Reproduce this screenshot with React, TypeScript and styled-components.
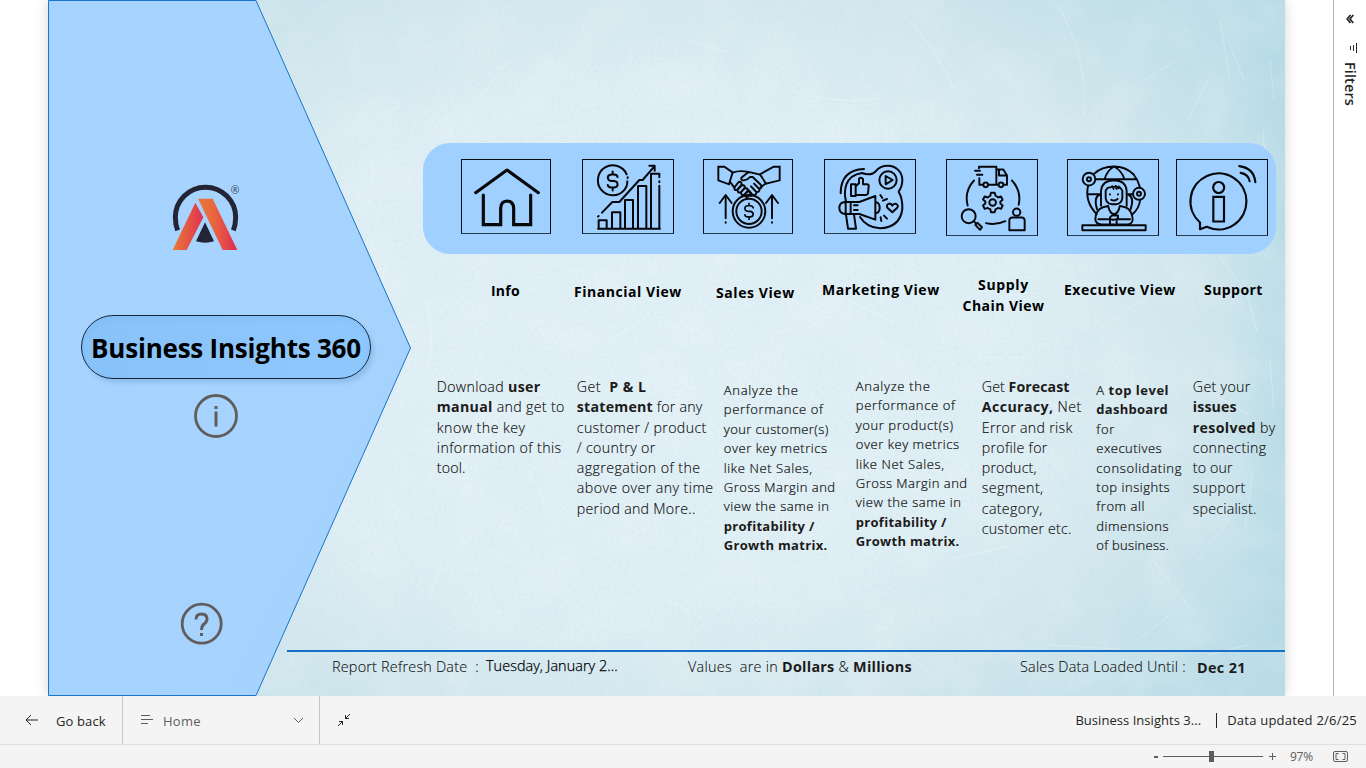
import React, { useLayoutEffect, useRef, useState } from 'react';
import styled, { createGlobalStyle } from 'styled-components';

const GlobalStyle = createGlobalStyle`
  * { box-sizing: border-box; }
  html, body { margin: 0; padding: 0; overflow: hidden; }
  body { background: #fff; color: #252423; font-family: 'Open Sans', 'Noto Sans', sans-serif; }
`;

/* ---------- text ---------- */

const Run = styled.span`
  display: inline-block;
  white-space: pre;
`;
const Strong = styled.b`
  font-weight: 700;
  color: #1c1b1a;
  -webkit-text-stroke: 0;
`;

/* A single line whose tracking is adjusted so that it takes the given width. */
function FitLine({ width, text }: { width: number; text: string }) {
  const ref = useRef<HTMLSpanElement>(null);
  const [spacing, setSpacing] = useState(0);
  const parts = text.split('*');
  const length = text.replace(/\*/g, '').length;
  useLayoutEffect(() => {
    const el = ref.current;
    if (!el) return;
    el.style.letterSpacing = '0px';
    const natural = el.getBoundingClientRect().width;
    const next = (width + 0.8 - natural) / length;
    el.style.letterSpacing = `${next}px`;
    setSpacing(next);
  }, [width, text, length]);
  return (
    <Run ref={ref} style={{ letterSpacing: spacing }}>
      {parts.map((p, i) => (i % 2 ? <Strong key={i}>{p}</Strong> : p))}
    </Run>
  );
}

/* ---------- page ---------- */

const Page = styled.div`
  display: flex;
  flex-direction: column;
  width: 1366px;
  height: 768px;
  overflow: hidden;
`;
const Workspace = styled.div`
  display: flex;
  height: 696px;
  overflow: hidden;
`;
const CanvasArea = styled.div`
  flex: 1;
  padding-left: 48px;
`;
const Canvas = styled.main`
  position: relative;
  display: grid;
  width: 1237px;
  height: 696px;
  box-shadow: 0 0 12px rgba(0, 0, 0, 0.17);
  background: #dfeef4;
`;
const Backdrop = styled.svg`
  position: absolute;
  inset: 0;
`;

/* ---------- left panel ---------- */

const SidePanel = styled.aside`
  position: relative;
  grid-area: 1 / 1;
  justify-self: start;
  width: 363px;
  height: 696px;
  display: flex;
  flex-direction: column;
  align-items: flex-start;
`;
const Logo = styled.svg`
  display: block;
  margin: 180px 0 0 122px;
`;
const TitlePill = styled.div`
  display: flex;
  align-items: center;
  justify-content: center;
  width: 290px;
  height: 64px;
  margin: 60px 0 0 33px;
  padding: 1px 0 0;
  border: 1.4px solid #14273a;
  border-radius: 32px;
  background: linear-gradient(100deg, #87c2f9, #8fc8fd);
  box-shadow: 3px 4px 4px rgba(60, 110, 160, 0.2), inset 0 3px 5px rgba(110, 180, 240, 0.3);
  color: #000;
  font-size: 26px;
  font-weight: 700;
`;
const RoundButton = styled.svg<{ $top: number; $left: number }>`
  display: block;
  margin: ${(p) => p.$top}px 0 0 ${(p) => p.$left}px;
`;

/* ---------- report ---------- */

const Report = styled.section`
  position: relative;
  grid-area: 1 / 1;
  display: flex;
  flex-direction: column;
  height: 696px;
  padding-top: 143px;
  pointer-events: none;
`;
const Tray = styled.nav`
  display: flex;
  align-items: flex-start;
  width: 853px;
  height: 111px;
  margin-left: 375px;
  padding: 16px 0 0 38px;
  border-radius: 27px;
  background: #a0d0ff;
`;
const IconFrame = styled.div<{ $w: number; $h: number; $gap: number }>`
  width: ${(p) => p.$w}px;
  height: ${(p) => p.$h}px;
  margin-right: ${(p) => p.$gap}px;
  border: 1px solid #0a0e14;
  border-bottom-color: #2b3b4e;
  svg { display: block; margin: -1px; }
`;
const Labels = styled.div`
  display: grid;
  grid-template-columns: 83px 142px 106px 140px 102px 140px 60px;
  height: 76px;
  margin-left: 443px;
  padding-top: 25px;
  color: #000;
  font-size: 14px;
  font-weight: 700;
  line-height: 21px;
`;
const Label = styled.div<{ $drop: number }>`
  display: flex;
  flex-direction: column;
  align-items: flex-start;
  margin-top: ${(p) => p.$drop}px;
`;
const CenteredLabel = styled(Label)`
  align-items: center;
  width: 83px;
`;
const Descriptions = styled.div`
  display: grid;
  grid-template-columns: 140px 147px 132px 126px 114.5px 96.5px 90px;
  margin: 47px 0 0 388.8px;
`;
const Description = styled.div<{ $small?: boolean; $drop?: number }>`
  display: flex;
  flex-direction: column;
  align-items: flex-start;
  margin-top: ${(p) => p.$drop ?? 0}px;
  color: #0c0c0c;
  font-weight: 300;
  font-size: ${(p) => (p.$small ? 13 : 14.2)}px;
  line-height: ${(p) => (p.$small ? 19.4 : 20.3)}px;
  -webkit-text-stroke: ${(p) => (p.$small ? 0.22 : 0.14)}px #1a1a1a;
`;
const Footer = styled.footer`
  display: flex;
  height: 46px;
  margin: auto 0 0 239px;
  padding: 6px 0 0 45px;
  border-top: 2px solid #1670c8;
  font-size: 14.4px;
  font-weight: 300;
  line-height: 18px;
`;
const FootItem = styled.div<{ $w: number; $drop?: number; $dark?: boolean }>`
  width: ${(p) => p.$w}px;
  margin-top: ${(p) => p.$drop ?? 0}px;
  color: ${(p) => (p.$dark ? '#000' : '#111')};
  -webkit-text-stroke: ${(p) => (p.$dark ? '0.25px #000' : '0.12px #111')};
`;

/* ---------- filter pane ---------- */

const FilterPane = styled.aside`
  display: flex;
  flex-direction: column;
  align-items: center;
  width: 33px;
  padding: 14px 0 0;
  border-left: 1px solid #b3b0ad;
`;
const FilterGlyph = styled.svg`
  display: block;
  margin: 19px 0 0 7px;
`;
const FilterText = styled.div`
  margin-top: 9px;
  writing-mode: vertical-rl;
  font-size: 14.5px;
  font-weight: 600;
  line-height: 18px;
  letter-spacing: 0.1px;
`;

/* ---------- bottom bars ---------- */

const PageBar = styled.div`
  display: flex;
  height: 48px;
  background: #f4f4f4;
  font-size: 13px;
`;
const BackButton = styled.div`
  display: flex;
  align-items: center;
  width: 123px;
  padding-left: 25px;
  gap: 17px;
  border-right: 1px solid #c8c6c4;
`;
const PagePicker = styled.div`
  display: flex;
  align-items: center;
  width: 197px;
  padding: 0 15px 0 17px;
  border-right: 1px solid #c8c6c4;
  color: #605e5c;
`;
const BarText = styled.span`
  padding-top: 2px;
`;
const PageName = styled(BarText)`
  flex: 1;
  margin-left: 9px;
`;
const CollapseButton = styled.div`
  display: flex;
  align-items: center;
  flex: 1;
  padding-left: 17px;
`;
const Meta = styled.div`
  display: flex;
  align-items: center;
  padding-right: 9px;
`;
const MetaRule = styled.span`
  width: 1px;
  height: 15px;
  margin: 0 10px 0 15px;
  background: #252423;
`;
const StatusBar = styled.div`
  display: flex;
  align-items: center;
  justify-content: flex-end;
  height: 24px;
  padding-right: 18px;
  border-top: 1px solid #dededd;
  background: #f4f4f4;
  color: #605e5c;
  font-size: 12px;
`;
const Minus = styled.span`
  width: 4px;
  height: 2px;
  margin-right: 5px;
  background: #605e5c;
`;
const Track = styled.div`
  display: flex;
  align-items: center;
  width: 100px;
  height: 11px;
  padding-left: 46px;
  background: linear-gradient(#605e5c, #605e5c) 0 5px / 100% 1px no-repeat;
`;
const Thumb = styled.span`
  width: 5px;
  height: 11px;
  background: #605e5c;
`;
const Percent = styled.span`
  width: 43px;
  margin-left: 8px;
`;

/* ---------- drawings ---------- */

function Paper() {
  const scratches = [
    'M860 20 q30 30 46 70', 'M1010 6 q30 50 26 110', 'M1180 40 l16 40', 'M1130 60 l-40 24', 'M640 40 l40 12',
    'M1215 130 l6 80', 'M1195 280 l14 52', 'M1050 330 l50 -34', 'M560 340 q40 -20 60 -46', 'M480 470 l20 40',
    'M900 560 l60 -14', 'M1105 560 l38 50', 'M1205 470 l-8 60', 'M330 240 l22 -20', 'M430 100 l30 -38',
    'M395 560 l-14 38', 'M620 600 l38 20', 'M1000 645 l70 4', 'M1160 655 l40 -10', 'M715 480 q30 40 24 70',
    'M378 300 q10 40 2 70', 'M800 300 l50 24', 'M1000 420 l40 -30', 'M840 640 l44 34', 'M1150 560 l30 -40',
    'M740 90 q50 16 90 8', 'M930 358 h50', 'M1172 20 l10 60', 'M1140 120 l20 -40', 'M1222 60 l4 40',
    'M1222 360 l4 50', 'M1160 240 l36 50', 'M1090 640 l30 -24', 'M1140 380 l60 34',
  ];
  return (
    <Backdrop width="1237" height="696" aria-hidden="true">
      <defs>
        <radialGradient id="light" gradientUnits="userSpaceOnUse" cx="0" cy="0" r="1"
          gradientTransform="translate(590 350) scale(760 510)">
          <stop offset="0" stopColor="#e1f0f6" />
          <stop offset="0.5" stopColor="#deeef4" />
          <stop offset="0.75" stopColor="#d1e6ed" />
          <stop offset="1" stopColor="#bcdde7" />
        </radialGradient>
        <linearGradient id="edge" x1="0" x2="1">
          <stop offset="0.95" stopColor="#b6dbe6" stopOpacity="0" />
          <stop offset="1" stopColor="#b4dae6" stopOpacity="0.7" />
        </linearGradient>
        <filter id="grain" x="0" y="0" width="100%" height="100%">
          <feTurbulence type="fractalNoise" baseFrequency="0.3" numOctaves="3" seed="8" />
          <feColorMatrix values="0 0 0 0 0.5  0 0 0 0 0.73  0 0 0 0 0.8  1.6 0 0 0 -0.78" />
        </filter>
        <filter id="clouds" x="0" y="0" width="100%" height="100%">
          <feTurbulence type="fractalNoise" baseFrequency="0.02" numOctaves="5" seed="3" />
          <feColorMatrix values="0 0 0 0 1  0 0 0 0 1  0 0 0 0 1  1.4 0 0 0 -0.55" />
        </filter>
      </defs>
      <rect width="1237" height="696" fill="url(#light)" />
      <rect width="1237" height="696" fill="url(#edge)" />
      <rect width="1237" height="696" filter="url(#clouds)" opacity="0.24" />
      <rect width="1237" height="696" filter="url(#grain)" opacity="0.4" />
      <g fill="none" stroke="#fff" strokeWidth="0.9" opacity="0.3">
        {scratches.map((d) => <path key={d} d={d} />)}
      </g>
    </Backdrop>
  );
}

function ArrowPanel() {
  return (
    <Backdrop width="364" height="696" aria-hidden="true">
      <defs>
        <linearGradient id="panel" x1="0" y1="0" x2="1" y2="1">
          <stop offset="0" stopColor="#a5d2fe" />
          <stop offset="0.45" stopColor="#a7d4ff" />
          <stop offset="1" stopColor="#a4d2fd" />
        </linearGradient>
      </defs>
      <path d="M.5 .5 H208 L362.500 348 L208 695.500 H.5 Z" fill="url(#panel)" stroke="#1a74c9" />
    </Backdrop>
  );
}

function BrandLogo() {
  return (
    <Logo width="72" height="75" viewBox="90 30 216 225">
      <defs>
        <linearGradient id="legL"><stop offset="0" stopColor="#ea7b35" /><stop offset="1" stopColor="#df3054" /></linearGradient>
        <linearGradient id="legR"><stop offset="0" stopColor="#e8783a" /><stop offset="0.4" stopColor="#e9663e" /><stop offset="1" stopColor="#de2c55" /></linearGradient>
      </defs>
      <path d="M113 181 Q106 164 106 142 A90 90 0 0 1 287 142 Q287 164 280 181" fill="none" stroke="#232537" strokeWidth="15" />
      <path d="M195 157 L222 214 Q195 222 168 214 Z" fill="#232537" />
      <path d="M98 240 L166 98 L190 142 L140 240 Z" fill="url(#legL)" />
      <path d="M174 86 H218 L292 240 H248 Z" fill="url(#legR)" />
      <text x="285" y="72" textAnchor="middle" fontSize="31" fill="#34435c" fontFamily="Open Sans">®</text>
    </Logo>
  );
}

type Art = { box: string; w: number; h: number; gap: number; art: React.ReactNode };

const Dollar = ({ x, y, s = 1 }: { x: number; y: number; s?: number }) => (
  <path
    transform={`translate(${x} ${y}) scale(${s})`}
    d="M15 -12 Q14 -20 4 -20 H-4 Q-15 -19 -15 -10 Q-14 0 -3 0 H4 Q15 1 15 11 Q14 20 4 20 H-4 Q-14 20 -15 12 M0 -29 V-20 M0 20 V29"
  />
);

const ICONS: Art[] = [
  {
    box: '63 57 270 225', w: 90, h: 75, gap: 31,
    art: (
      <g strokeWidth="9.500">
        <path d="M107 158 L201 90 L295 158" />
        <path d="M130 165 V254 H182 V204 Q183 184 201 183 Q220 184 221 204 V254 H272 V165" strokeLinejoin="miter" />
      </g>
    ),
  },
  {
    box: '426 57 276 225', w: 92, h: 75, gap: 29,
    art: (
      <g strokeWidth="6">
        <path d="M560 103 A45 45 0 1 0 552 151 Q562 140 562 124 M563 112 v2" />
        <Dollar x={518} y={123} s={0.98} />
        <path d="M476 266 V241 H500 V266 M516 266 V217 H541 V266 M555 266 V180 H579 V266 M594 266 V138 H619 V266 M633 266 V101 H658 V112 M658 124 v3 M658 137 V266 M474 266 H660" />
        <path d="M474 230 l2 -2 M486 218 L517 186 H538 L598 120 H608 L643 79 M628 77 H644 V92" />
      </g>
    ),
  },
  {
    box: '69 57 270 225', w: 90, h: 75, gap: 31,
    art: (
      <g strokeWidth="5.800">
        <path d="M115 80 H133 L158 97 L147 133 L115 121 Z M299 80 H281 L240 103 L258 131 L299 121 Z" strokeLinejoin="miter" />
        <path d="M158 98 Q178 90 205 96 M152 128 L163 143 M258 130 L242 142" />
        <path d="M240 104 L212 97 Q204 96 198 102 L184 113 Q182 122 192 121 Q204 119 210 111 H218 L243 135 Q248 144 238 147 M238 147 L222 131 M238 147 Q240 157 229 156 L213 139 M229 156 Q230 167 218 165 L206 151 M218 165 Q213 171 207 164" />
        <path d="M164 141 L177 125 Q187 125 184 135 L171 150 Q161 152 164 141 M173 149 L186 135 Q196 135 194 144 L182 157 Q172 160 173 149 M183 156 L195 144 Q205 144 203 153 L193 164 Q183 168 183 156 M194 163 L204 154 Q213 154 211 162 L204 170 Q195 174 194 163" />
        <circle cx="207" cy="214" r="49" /><circle cx="207" cy="214" r="38" />
        <Dollar x={207} y={214} s={0.84} />
        <path d="M137 235 V166 M119 189 L137 165 L155 189 M137 247 v1 M276 235 V166 M258 189 L276 165 L294 189 M276 247 v1" />
      </g>
    ),
  },
  {
    box: '432 57 276 225', w: 92, h: 75, gap: 30,
    art: (
      <g strokeWidth="6">
        <path d="M498 184 Q491 158 499 134 Q510 104 546 99 Q574 109 588 93 Q599 77 624 77 A43 43 0 0 1 667 120 Q667 139 656 155 Q668 175 667 207 Q660 262 600 265 Q560 263 540 231" />
        <path d="M482 160 Q482 90 552 87" />
        <circle cx="624" cy="120" r="26" /><path d="M617 108 V133 L638 120 Z" />
        <path d="M513 133 H527 V168 H513 Z M527 139 L537 130 V116 Q543 110 549 117 V133 H562 Q567 134 566 140 L564 160 Q562 165 556 165 H527" />
        <path d="M586 168 V239 L538 222 H495 Q478 219 478 203 Q479 187 495 186 H538 Z M586 187 H590 Q599 190 599 203 Q599 216 590 219 H586 M497 187 V222 M512 187 V222 M522 196 H533 M522 210 H533 M498 224 L504 266 H528 L522 224" />
        <path d="M637 217 L622 203 Q618 194 627 191 Q634 190 637 197 Q641 189 649 192 Q657 197 651 204 Z" />
        <path d="M601 165 l6 9 M609 182 l12 -5 M602 232 l2 11 M612 227 l9 9" />
      </g>
    ),
  },
  {
    box: '48 57 276 230', w: 92, h: 77, gap: 29,
    art: (
      <g strokeWidth="5.800">
        <path d="M147 84 V80 H199 V134 H176 M148 114 V134 H157 M135 92 H150 M141 104 H157 M199 88 H220 L231 106 V134 H222 M199 134 H204 M207 89 V106 H230" />
        <circle cx="167" cy="134" r="7" /><circle cx="213" cy="134" r="7" />
        <path d="M132 121 Q102 153 113 196 M246 121 Q275 153 266 194 M168 249 Q197 256 226 243" />
        <path d="M181 167 L183 158 H194 L197 167 Q202 169 204 172 L213 169 L218 179 L211 185 V190 L218 196 L213 206 L204 203 Q201 206 197 207 L194 216 H183 L181 207 Q176 206 173 203 L164 206 L159 196 L166 190 V184 L159 178 L164 169 L173 172 Q177 168 181 167 Z" />
        <circle cx="188" cy="187" r="10" />
        <circle cx="116" cy="228" r="21" /><path d="M131 243 L138 250 M136 254 L142 248 L156 261 L150 269 Z" />
        <circle cx="260" cy="216" r="11" /><path d="M238 270 V240 Q239 232 247 232 H275 Q283 232 284 240 V270 Z" />
      </g>
    ),
  },
  {
    box: '411 57 276 230', w: 92, h: 77, gap: 17,
    art: (
      <g strokeWidth="5.800">
        <path d="M492 101 Q515 79 552 79 Q587 79 611 103 Q625 121 630 142 M474 138 Q464 185 500 222 M630 181 Q628 204 606 224 M498 117 H621 M552 79 Q530 92 524 117 M552 79 Q576 92 583 117 M473 162 H510 M510 163 Q490 170 501 207 M594 163 Q614 170 602 207 M594 162 H607" />
        <circle cx="477" cy="117" r="19" /><circle cx="477" cy="117" r="6" />
        <circle cx="627" cy="161" r="18" /><circle cx="627" cy="161" r="6" />
        <path d="M513 197 V152 Q516 121 552 120 Q588 121 590 152 V197 M527 151 L533 143 Q552 138 570 142 L577 151 V174 Q575 190 560 192 H544 Q529 190 527 174 Z M547 138 l4 8 M557 137 l3 9 M566 139 v5 M540 162 v1 M564 162 v1 M544 179 Q555 184 563 176" />
        <path d="M534 197 L517 202 Q497 210 496 238 Q498 252 514 253 H591 Q607 252 608 238 Q606 210 588 202 L570 197 M535 199 Q539 220 552 222 Q565 220 569 199 M505 237 H538 M566 237 H600 M540 253 V232 Q544 224 552 226 H564 V234 Q558 240 545 238 M560 238 V251" />
        <path d="M457 255 H647 V270 H457 Z" />
      </g>
    ),
  },
  {
    box: '738 57 276 230', w: 92, h: 77, gap: 0,
    art: (
      <g strokeWidth="6.500">
        <path d="M810 247 A84 84 0 1 1 830 260 L810 267 Z" />
        <circle cx="866" cy="142" r="16.500" /><path d="M850 170 H882 V244 H850 Z" strokeLinejoin="miter" />
        <path d="M928 78 Q972 84 976 126 M932 98 Q955 102 959 123" />
      </g>
    ),
  },
];

function TrayIcon({ box, w, h, gap, art }: Art) {
  return (
    <IconFrame $w={w} $h={h} $gap={gap}>
      <svg width={w} height={h} viewBox={box} fill="none" stroke="#05070a" strokeLinecap="round" strokeLinejoin="round">
        {art}
      </svg>
    </IconFrame>
  );
}

/* ---------- data ---------- */

type Line = [string, number];

const DESCRIPTIONS: { small?: boolean; drop?: number; lines: Line[] }[] = [
  { lines: [['Download *user*', 103], ['*manual* and get to', 127], ['know the key', 88], ['information of this', 124], ['tool.', 28]] },
  {
    lines: [['Get  *P & L*', 69], ['*statement* for any', 125], ['customer / product', 129], ['/ country or', 78],
      ['aggregation of the', 123], ['above over any time', 136], ['period and More..', 118]],
  },
  {
    small: true, drop: 4,
    lines: [['Analyze the', 74], ['performance of', 99], ['your customer(s)', 104], ['over key metrics', 103], ['like Net Sales,', 88],
      ['Gross Margin and', 111], ['view the same in', 105], ['*profitability /*', 90], ['*Growth matrix.*', 103]],
  },
  {
    small: true,
    lines: [['Analyze the', 74], ['performance of', 99], ['your product(s)', 97], ['over key metrics', 103], ['like Net Sales,', 88],
      ['Gross Margin and', 111], ['view the same in', 105], ['*profitability /*', 90], ['*Growth matrix.*', 103]],
  },
  {
    lines: [['Get *Forecast*', 87], ['*Accuracy,* Net', 99], ['Error and risk', 90], ['profile for', 65], ['product,', 54],
      ['segment,', 61], ['category,', 60], ['customer etc.', 89]],
  },
  {
    small: true, drop: 4,
    lines: [['A *top level*', 72], ['*dashboard*', 71], ['for', 18], ['executives', 65], ['consolidating', 85],
      ['top insights', 73], ['from all', 48], ['dimensions', 72], ['of business.', 72]],
  },
  { lines: [['Get your', 57], ['*issues*', 43], ['*resolved* by', 82], ['connecting', 73], ['to our', 39], ['support', 52], ['specialist.', 63]] },
];

export default function App() {
  return (
    <Page>
      <GlobalStyle />
      <Workspace>
        <CanvasArea>
          <Canvas>
            <Paper />
            <ArrowPanel />
            <SidePanel>
              <BrandLogo />
              <TitlePill><FitLine text="Business Insights 360" width={269} /></TitlePill>
              <RoundButton $top={15} $left={146} width="44" height="44" fill="none" stroke="#605e5c">
                <circle cx="22" cy="22" r="20.500" strokeWidth="2.800" />
                <path d="M22 17.500 V32.500 M22 12 V15" strokeWidth="3" />
              </RoundButton>
              <RoundButton $top={164} $left={132} width="44" height="44" fill="none" stroke="#605e5c">
                <circle cx="21.700" cy="21.700" r="19.500" strokeWidth="2.800" />
                <path d="M16 17.500 Q16 12 21.500 12 Q27 12 27 17 Q27 20 24 22 Q21.500 24 21.500 28 M21.500 31 V34" strokeWidth="2.900" />
              </RoundButton>
            </SidePanel>
            <Report>
              <Tray>
                {ICONS.map((icon) => <TrayIcon key={icon.box} {...icon} />)}
              </Tray>
              <Labels>
                <Label $drop={1}><FitLine text="Info" width={28} /></Label>
                <Label $drop={2}><FitLine text="Financial View" width={107} /></Label>
                <Label $drop={3}><FitLine text="Sales View" width={78} /></Label>
                <Label $drop={0}><FitLine text="Marketing View" width={117} /></Label>
                <CenteredLabel $drop={-5}>
                  <FitLine text="Supply" width={50} />
                  <FitLine text="Chain View" width={81} />
                </CenteredLabel>
                <Label $drop={0}><FitLine text="Executive View" width={111} /></Label>
                <Label $drop={0}><FitLine text="Support" width={58} /></Label>
              </Labels>
              <Descriptions>
                {DESCRIPTIONS.map((d, i) => (
                  <Description key={i} $small={d.small} $drop={d.drop}>
                    {d.lines.map(([text, width]) => <FitLine key={text} text={text} width={width} />)}
                  </Description>
                ))}
              </Descriptions>
              <Footer>
                <FootItem $w={154}><FitLine text="Report Refresh Date  :" width={146} /></FootItem>
                <FootItem $w={202} $drop={-1} $dark><FitLine text="Tuesday, January 2..." width={131} /></FootItem>
                <FootItem $w={332}><FitLine text="Values  are in *Dollars* & *Millions*" width={223} /></FootItem>
                <FootItem $w={177}><FitLine text="Sales Data Loaded Until :" width={165} /></FootItem>
                <FootItem $w={50} $drop={1}><FitLine text="*Dec 21*" width={48} /></FootItem>
              </Footer>
            </Report>
          </Canvas>
        </CanvasArea>
        <FilterPane>
          <svg width="8" height="10" fill="none" stroke="#252423" strokeWidth="1.700">
            <path d="M4.500 1 L1.200 5 L4.500 9 M7.300 1 L4 5 L7.300 9" />
          </svg>
          <FilterGlyph width="8" height="10" fill="none" stroke="#252423" strokeWidth="1">
            <path d="M6.500 0 V10 M3.500 2 V8 M.5 3 V7" />
          </FilterGlyph>
          <FilterText>Filters</FilterText>
        </FilterPane>
      </Workspace>
      <PageBar>
        <BackButton>
          <svg width="14" height="12" fill="none" stroke="#252423"><path d="M1 6 H13 M6 1 L1 6 L6 11" /></svg>
          <BarText><FitLine text="Go back" width={49} /></BarText>
        </BackButton>
        <PagePicker>
          <svg width="14" height="12" fill="none" stroke="#605e5c"><path d="M1 1.500 H10 M1 5.500 H13 M1 9.500 H8" /></svg>
          <PageName><FitLine text="Home" width={37} /></PageName>
          <svg width="11" height="7" fill="none" stroke="#605e5c"><path d="M1 1 L5.500 5.500 L10 1" /></svg>
        </PagePicker>
        <CollapseButton>
          <svg width="14" height="14" fill="none" stroke="#252423"><path d="M1 13 L5.500 8.500 M2 8.500 H5.500 V12 M13 1 L8.500 5.500 M8.500 2 V5.500 H12" /></svg>
        </CollapseButton>
        <Meta>
          <FitLine text="Business Insights 3..." width={125} />
          <MetaRule />
          <FitLine text="Data updated 2/6/25" width={129} />
        </Meta>
      </PageBar>
      <StatusBar>
        <Minus />
        <Track><Thumb /></Track>
        <svg width="19" height="9" fill="none" stroke="#605e5c"><path d="M6 4.500 H13 M9.500 1 V8" /></svg>
        <Percent><FitLine text="97%" width={22} /></Percent>
        <svg width="15" height="11" fill="none" stroke="#605e5c">
          <rect x=".5" y=".5" width="14" height="10" rx="1.500" />
          <path d="M5.500 2.500 H3 V8.500 H5.500 M9.500 2.500 H12 V8.500 H9.500" />
        </svg>
      </StatusBar>
    </Page>
  );
}
